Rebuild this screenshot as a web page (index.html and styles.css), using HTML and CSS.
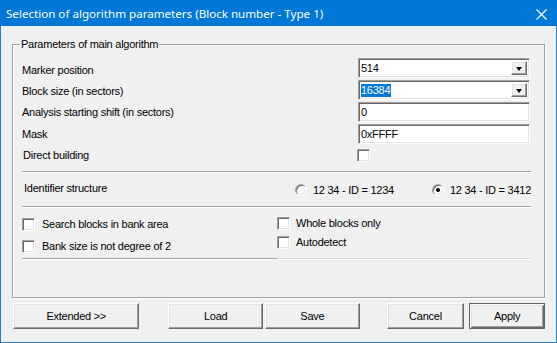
FILE: index.html
```html
<!DOCTYPE html>
<html>
<head>
<meta charset="utf-8">
<link rel="stylesheet" href="styles.css">
</head>
<body>
<div class="window">
  <div class="titlebar">
    <span class="title">Selection of algorithm parameters (Block number - Type 1)</span>
    <svg class="close" width="11" height="11" viewBox="0 0 11 11"><path d="M0.5 0.5 L10.5 10.5 M10.5 0.5 L0.5 10.5" stroke="#fff" stroke-width="1.1" fill="none"/></svg>
  </div>
  <div class="client">
    <fieldset class="group">
      <legend>Parameters of main algorithm</legend>
      <div class="params">
        <div class="row">
          <span class="lbl lbl-low">Marker position</span>
          <div class="combo sunken"><span class="val">514</span><span class="drop raised"><i class="arrow"></i></span></div>
        </div>
        <div class="row">
          <span class="lbl lbl-low1">Block size (in sectors)</span>
          <div class="combo sunken"><span class="val"><span class="sel">16384</span></span><span class="drop raised"><i class="arrow"></i></span></div>
        </div>
        <div class="row">
          <span class="lbl">Analysis starting shift (in sectors)</span>
          <div class="edit sunken"><span class="val">0</span></div>
        </div>
        <div class="row">
          <span class="lbl">Mask</span>
          <div class="edit sunken"><span class="val">0xFFFF</span></div>
        </div>
        <div class="row row-check">
          <span class="lbl lbl-ind">Direct building</span>
          <div class="ctl-left"><span class="check sunken"></span></div>
        </div>
      </div>
      <div class="sep"></div>
      <div class="idrow">
        <span class="lbl lbl-id">Identifier structure</span>
        <div class="radios">
          <label class="radio-item"><span class="radio"></span><span>12 34 - ID = 1234</span></label>
          <label class="radio-item radio-item2"><span class="radio on"></span><span>12 34 - ID = 3412</span></label>
        </div>
      </div>
      <div class="sep"></div>
      <div class="opts">
        <div class="col col-left">
          <label class="opt opt-l1"><span class="check sunken"></span><span>Search blocks in bank area</span></label>
          <label class="opt opt-l2"><span class="check sunken"></span><span>Bank size is not degree of 2</span></label>
          <div class="line dark"></div>
        </div>
        <div class="col col-right">
          <label class="opt opt-r1"><span class="check sunken"></span><span>Whole blocks only</span></label>
          <label class="opt opt-r2"><span class="check sunken"></span><span>Autodetect</span></label>
          <div class="line light"></div>
        </div>
      </div>
    </fieldset>
    <div class="buttons">
      <button class="btn raised b-ext">Extended &gt;&gt;</button>
      <button class="btn raised b-load">Load</button>
      <button class="btn raised b-save">Save</button>
      <button class="btn raised b-cancel">Cancel</button>
      <button class="btn raised b-apply default">Apply</button>
    </div>
  </div>
</div>
</body>
</html>
```
FILE: styles.css
```css
html, body {
  margin: 0;
  padding: 0;
  background: #f0f0f0;
}
.window {
  width: 557px;
  height: 343px;
  box-sizing: border-box;
  border: 1px solid #1883d7;
  border-top: 0;
  background: #f0f0f0;
  display: flex;
  flex-direction: column;
  font-family: "Liberation Sans", Arial, sans-serif;
  font-size: 11px;
  letter-spacing: -0.25px;
  color: #000;
}
.titlebar {
  height: 26px;
  margin: 0 -1px;
  background: #0078d7;
  display: flex;
  align-items: center;
  justify-content: space-between;
  padding: 1px 10px 0 6px;
  box-sizing: border-box;
}
.title {
  font-family: "Noto Sans", "Open Sans", sans-serif;
  font-size: 11.6px;
  letter-spacing: 0;
  color: #fff;
}
.close {
  display: block;
  margin-top: 1px;
}
.client {
  padding: 12px 11px 0 11px;
  display: flex;
  flex-direction: column;
}
.group {
  margin: 0;
  padding: 6px 14px 37px 9px;
  border: 1px solid #a0a0a0;
  box-shadow: inset 1px 1px #fff, 1px 1px #fff;
  min-width: 0;
}
.group legend {
  padding: 0 1px;
  margin-left: -2px;
  line-height: 13px;
}
.params {
  display: flex;
  flex-direction: column;
}
.row {
  height: 22px;
  display: flex;
  align-items: center;
  justify-content: space-between;
}
.lbl {
  line-height: 13px;
}
.lbl-low { position: relative; top: 2px; }
.lbl-low1 { position: relative; top: 1px; }
.lbl-ind { padding-left: 1px; }
.row-check {
  height: 20px;
}
.combo, .edit {
  width: 172px;
  height: 20px;
  box-sizing: border-box;
  background: #fff;
  display: flex;
  align-items: center;
  justify-content: space-between;
}
.sunken {
  border: 1px solid;
  border-color: #a0a0a0 #fff #fff #a0a0a0;
  box-shadow: inset 1px 1px #696969, inset -1px -1px #e3e3e3;
}
.raised {
  border: 1px solid;
  border-color: #fff #696969 #696969 #fff;
  box-shadow: inset -1px -1px #a0a0a0, inset 1px 1px #e3e3e3;
}
.val {
  padding-left: 2px;
  line-height: 13px;
}
.sel {
  background: #0078d7;
  color: #fff;
  display: inline-block;
  padding-right: 1px;
}
.drop {
  width: 16px;
  height: 14px;
  margin-right: 2px;
  box-sizing: border-box;
  background: #f0f0f0;
  display: flex;
  align-items: center;
  justify-content: center;
}
.arrow {
  width: 0;
  height: 0;
  border-left: 3.5px solid transparent;
  border-right: 3.5px solid transparent;
  border-top: 4px solid #000;
  margin-top: 1px;
}
.ctl-left {
  width: 173px;
  display: flex;
}
.check {
  width: 13px;
  height: 13px;
  box-sizing: border-box;
  background: #fff;
  display: inline-block;
  flex: none;
}
.sep {
  margin-top: 6px;
  height: 0;
  border-top: 1px solid #a0a0a0;
  border-bottom: 1px solid #fff;
  margin-right: -1px;
}
.idrow {
  height: 33px;
  display: flex;
  align-items: center;
  justify-content: space-between;
}
.sep + .idrow + .sep { margin-top: 0; }
.lbl-id { padding-left: 2px; position: relative; top: -1px; }
.radios {
  display: flex;
  align-items: center;
  margin-right: -1px;
}
.radio-item {
  display: flex;
  align-items: center;
  gap: 6px;
}
.radio-item2 { margin-left: 38px; }
.radio {
  width: 12px;
  height: 12px;
  box-sizing: border-box;
  border-radius: 50%;
  border: 1px solid;
  border-color: #a0a0a0 #fff #fff #a0a0a0;
  box-shadow: inset 1px 1px #696969, inset -1px -1px #e3e3e3;
  background: #fff;
  display: flex;
  align-items: center;
  justify-content: center;
}
.radio.on::after {
  content: "";
  width: 4px;
  height: 4px;
  border-radius: 50%;
  background: #000;
}
.opts {
  display: flex;
  margin-right: -1px;
}
.col {
  display: flex;
  flex-direction: column;
}
.col-left { width: 255px; }
.col-right { flex: 1; }
.opt {
  height: 20px;
  display: flex;
  align-items: center;
  gap: 6px;
}
.col-left .opt { gap: 7px; }
.opt-l1 { margin-top: 6px; }
.opt-l2 { margin-top: 2px; }
.opt-r1 { margin-top: 5px; }
.opt-r2 { margin-top: -1px; }
.line { height: 0; }
.line.dark { margin-top: 2px; border-top: 1px solid #a0a0a0; border-bottom: 1px solid #fff; }
.line.light { margin-top: 6px; border-top: 1px solid #dadada; border-bottom: 1px solid #fff; }
.buttons {
  display: flex;
  margin-top: 5px;
  padding-left: 1px;
}
.btn {
  height: 26px;
  box-sizing: border-box;
  background: #f0f0f0;
  font-family: "Liberation Sans", Arial, sans-serif;
  font-size: 11px;
  letter-spacing: -0.25px;
  color: #000;
  padding: 0;
  margin: 0;
}
.b-ext { width: 127px; }
.b-load { width: 95px; margin-left: 29px; }
.b-save { width: 95px; margin-left: 2px; }
.b-cancel { width: 78px; margin-left: 27px; }
.b-apply { width: 76px; margin-left: 5px; }
.btn.default {
  border: 1px solid #646464;
  box-shadow: inset 1px 1px #fff, inset -1px -1px #696969, inset 2px 2px #e3e3e3, inset -2px -2px #a0a0a0;
}
```
